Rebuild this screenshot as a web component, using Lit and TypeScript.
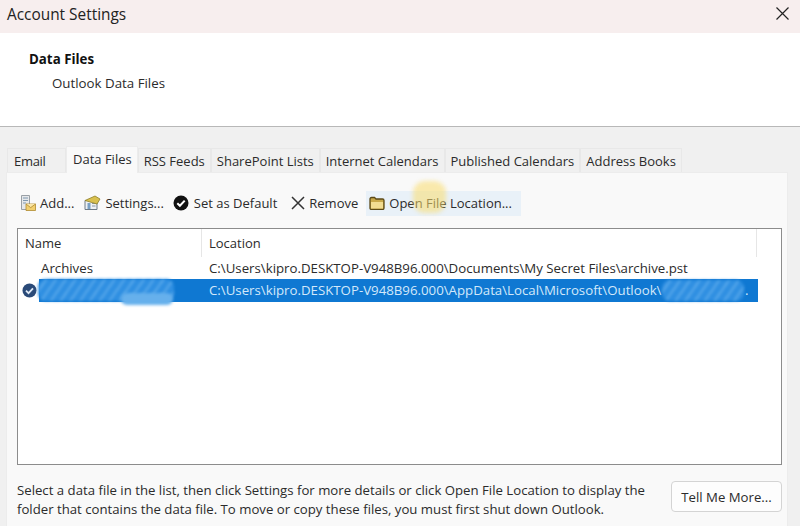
import { LitElement, html, css } from "lit";
import { customElement } from "lit/decorators.js";

const tabs = ["Email", "Data Files", "RSS Feeds", "SharePoint Lists", "Internet Calendars", "Published Calendars", "Address Books"];

@customElement("app-root")
export class AppRoot extends LitElement {
  static override styles = css`
    :host {
      display: block;
      width: 800px;
      height: 526px;
      overflow: hidden;
      background: #f0f0f0;
      font-family: "Open Sans", "Noto Sans", sans-serif;
      font-size: 13px;
      color: #2b2b2b;
    }
    .titlebar {
      height: 33px;
      background: #f7eeee;
      display: flex;
      align-items: center;
      justify-content: space-between;
      padding: 0 11px 4px 7px;
      box-sizing: border-box;
      font-size: 15.4px;
      color: #222;
    }
    .titlebar svg {
      margin-bottom: 2px;
    }
    .header {
      height: 94px;
      box-sizing: border-box;
      background: #fff;
      padding: 17px 0 0 29px;
      border-bottom: 1px solid #b8b8b8;
      font-size: 13.3px;
    }
    .header b {
      display: block;
      font-weight: 700;
      color: #111;
      line-height: 18px;
    }
    .header span {
      display: block;
      margin: 6px 0 0 23px;
      line-height: 18px;
    }
    .tabs {
      display: flex;
      align-items: flex-end;
      height: 26px;
      margin: 19px 0 0 7px;
      font-size: 13px;
    }
    .tab {
      height: 24px;
      line-height: 24px;
      padding: 0 5px;
      box-sizing: border-box;
      background: #f0f0f0;
      border: 1px solid #e8e8e8;
      border-bottom: none;
      white-space: nowrap;
    }
    .tab.first {
      width: 59px;
      padding-left: 6px;
      letter-spacing: -0.3px;
    }
    .tab.active {
      height: 27px;
      line-height: 24px;
      padding: 0 5px 0 6px;
      background: #f9f9f9;
      border-color: #ececec;
      margin-bottom: -1px;
      position: relative;
      z-index: 1;
    }
    .panel {
      margin-left: 6px;
      width: 782px;
      height: 354px;
      box-sizing: border-box;
      background: #f9f9f9;
      border: 1px solid #ececec;
      border-bottom: none;
      padding: 17px 5px 0 10px;
    }
    .toolbar {
      display: flex;
      align-items: center;
      height: 26px;
      position: relative;
    }
    .tool {
      display: flex;
      align-items: center;
      gap: 4px;
      height: 26px;
      padding: 0 3px;
      white-space: nowrap;
    }
    .tool.s2 {
      margin-left: 4px;
    }
    .tool.s3 {
      margin-left: 3px;
      gap: 5px;
    }
    .tool.s4 {
      margin-left: 8px;
    }
    .tool.hot {
      margin-left: 5px;
      height: 25px;
      background: #e9f1f8;
      padding: 0 9px 0 3px;
      position: relative;
    }
    .spot {
      position: absolute;
      left: 47px;
      top: -10px;
      width: 33px;
      height: 32px;
      border-radius: 12px;
      background: rgba(250, 220, 110, 0.55);
      filter: blur(2px);
    }
    .list {
      margin-top: 12px;
      height: 237px;
      box-sizing: border-box;
      background: #fff;
      border: 1px solid #8c8c8c;
      position: relative;
      font-size: 13.25px;
    }
    .cols {
      display: grid;
      grid-template-columns: 184px 555px;
      height: 28px;
      line-height: 28px;
      font-size: 13px;
    }
    .cols div {
      padding-left: 7px;
      border-right: 1px solid #e6e6e6;
    }
    .row {
      display: grid;
      grid-template-columns: 184px 1fr;
      height: 22px;
      line-height: 23px;
      white-space: nowrap;
      width: 739px;
    }
    .row .name {
      padding-left: 23px;
    }
    .row .loc {
      padding-left: 7px;
    }
    .sel {
      display: flex;
      height: 23px;
      line-height: 23px;
      white-space: nowrap;
      position: relative;
    }
    .sel .mark {
      width: 21px;
      padding-left: 2px;
      box-sizing: border-box;
      display: flex;
      align-items: center;
      justify-content: center;
      flex: none;
    }
    .bar {
      display: grid;
      grid-template-columns: 163px 556px;
      width: 719px;
      background: #0f78d2;
      color: #d3e8fa;
      position: relative;
    }
    .bar .loc {
      padding-left: 7px;
      display: flex;
    }
    .scribble {
      position: absolute;
      border-radius: 8px;
      filter: blur(1.5px);
      background: repeating-linear-gradient(125deg, #2f8fe2 0 6px, #5aa9ea 6px 8px);
    }
    .scribble.left {
      left: -1px;
      top: 0;
      width: 136px;
      height: 22px;
    }
    .scribble.tail {
      left: 82px;
      top: 14px;
      width: 52px;
      height: 12px;
      background: #66b0ec;
    }
    .scribble.right {
      left: 623px;
      top: 1px;
      width: 82px;
      height: 21px;
    }
    .dot {
      position: absolute;
      left: 706px;
      top: 0;
    }
    .foot {
      display: flex;
      justify-content: space-between;
      align-items: flex-start;
      margin-top: 16px;
      font-size: 13.2px;
    }
    .foot p {
      margin: 0;
      line-height: 19px;
      width: 645px;
    }
    .more {
      width: 111px;
      height: 31px;
      box-sizing: border-box;
      background: #fdfdfd;
      border: 1px solid #d4d4d4;
      border-radius: 4px;
      font: inherit;
      color: inherit;
      padding: 0;
    }
  `;

  override render() {
    return html`
      <div class="titlebar">
        <span>Account Settings</span>
        <svg width="13" height="13" viewBox="0 0 13 13"><path d="M.5.5l12 12M12.5.5l-12 12" stroke="#222" stroke-width="1.2" fill="none"/></svg>
      </div>
      <div class="header">
        <b>Data Files</b>
        <span>Outlook Data Files</span>
      </div>
      <div class="tabs">
        ${tabs.map((t, i) => html`<div class="tab ${t === "Data Files" ? "active" : ""} ${i === 0 ? "first" : ""}">${t}</div>`)}
      </div>
      <div class="panel">
        <div class="toolbar">
          <div class="tool">
            <svg width="16" height="16" viewBox="0 0 16 16">
              <path d="M1.5.5h8v14h-8z" fill="#e6e8ea" stroke="#9aa0a6"/>
              <path d="M3 3h5M3 5.5h5M3 8h3" stroke="#7f98b0"/>
              <path d="M6 9h9.5v6.5H6z" fill="#f2cf6e" stroke="#b08a2e" stroke-width=".8"/>
              <path d="M6 9l4.7 3.6L15.500 9" fill="#fae6a8" stroke="#b08a2e" stroke-width=".8"/>
            </svg>
            <span>Add...</span>
          </div>
          <div class="tool s2">
            <svg width="17" height="16" viewBox="0 0 17 16">
              <path d="M1 5.500h12v9H1z" fill="#eef1f4" stroke="#6d7a86"/>
              <path d="M3.500 8h3v6h-3z" fill="#7aa0c4"/>
              <path d="M8 8.500h3.500M8 11h3.500" stroke="#8a97a3"/>
              <path d="M1 5.500L11 1l5 3-3 5z" fill="#d9c04e" stroke="#8e7f2a" stroke-width=".8"/>
            </svg>
            <span>Settings...</span>
          </div>
          <div class="tool s3">
            <svg width="16" height="16" viewBox="0 0 16 16">
              <circle cx="8" cy="8" r="7.500" fill="#111"/>
              <path d="M4.300 8.200l2.600 2.600 4.800-5.200" fill="none" stroke="#fff" stroke-width="2"/>
            </svg>
            <span>Set as Default</span>
          </div>
          <div class="tool s4">
            <svg width="14" height="14" viewBox="0 0 14 14"><path d="M1 1l12 12M13 1L1 13" stroke="#333" stroke-width="1.500" fill="none"/></svg>
            <span>Remove</span>
          </div>
          <div class="tool hot">
            <svg width="16" height="14" viewBox="0 0 16 14">
              <path d="M1 12V3q0-1.500 1.500-1.500h3L7 3h6.500Q15 3 15 4.500V12q0 1.500-1.500 1.500h-11Q1 13.500 1 12z" fill="#c9a94a" stroke="#5c4a18" stroke-width="1.300"/>
              <path d="M2 6h12v6.500H2z" fill="#f1dc92"/>
            </svg>
            <span>Open File Location...</span>
            <div class="spot"></div>
          </div>
        </div>
        <div class="list">
          <div class="cols">
            <div>Name</div>
            <div>Location</div>
          </div>
          <div class="row">
            <div class="name">Archives</div>
            <div class="loc">C:\\Users\\kipro.DESKTOP-V948B96.000\\Documents\\My Secret Files\\archive.pst</div>
          </div>
          <div class="sel">
            <div class="mark">
              <svg width="15" height="15" viewBox="0 0 15 15">
                <circle cx="7.500" cy="7.500" r="7" fill="#2a4a78"/>
                <path d="M4 7.700l2.500 2.400 4.500-4.800" fill="none" stroke="#dfe9f5" stroke-width="1.800"/>
              </svg>
            </div>
            <div class="bar">
              <div></div>
              <div class="loc">C:\\Users\\kipro.DESKTOP-V948B96.000\\AppData\\Local\\Microsoft\\Outlook\\</div>
              <div class="scribble left"></div>
              <div class="scribble tail"></div>
              <div class="scribble right"></div>
              <span class="dot">.</span>
            </div>
          </div>
        </div>
        <div class="foot">
          <p>Select a data file in the list, then click Settings for more details or click Open File Location to display the folder that contains the data file. To move or copy these files, you must first shut down Outlook.</p>
          <button class="more">Tell Me More...</button>
        </div>
      </div>
    `;
  }
}
